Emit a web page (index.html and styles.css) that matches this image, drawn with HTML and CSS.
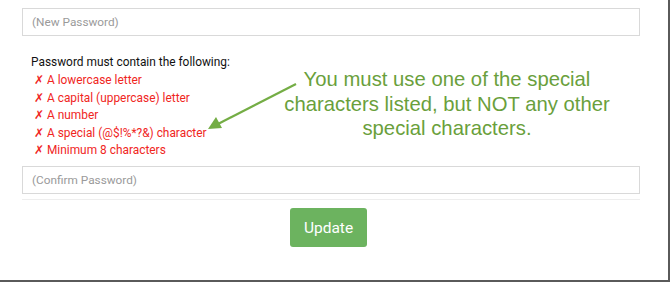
FILE: index.html
```html
<!DOCTYPE html>
<html lang="en">
<head>
  <meta charset="UTF-8" />
  <title>Change Password</title>
  <link rel="stylesheet" href="styles.css">
</head>
<body>
  <div class="frame">
    <form class="pw-form">
      <input class="pw-input" type="password" placeholder="(New Password)" />

      <!-- Password rules -->
      <div class="rules">
        <div class="rules-title">Password must contain the following:</div>
        <ul class="rules-list">
          <li>✗ A lowercase letter</li>
          <li>✗ A capital (uppercase) letter</li>
          <li>✗ A number</li>
          <li>✗ A special (@$!%*?&amp;) character</li>
          <li>✗ Minimum 8 characters</li>
        </ul>
      </div>

      <input class="pw-input" type="password" placeholder="(Confirm Password)" />
      <div class="divider"></div>

      <div class="actions">
        <button type="button" class="update-btn">Update</button>
      </div>
    </form>

    <!-- Annotation callout -->
    <div class="note">You must use one of the special<br>characters listed, but NOT any other<br>special characters.</div>
    <svg class="note-arrow" width="100" height="52" viewBox="0 0 100 52">
      <line x1="92" y1="4" x2="14" y2="44" stroke="#74ad45" stroke-width="2.2" />
      <polygon points="4,49 12,37 18,48" fill="#74ad45" />
    </svg>
  </div>
</body>
</html>
```

FILE: styles.css
```css
body {
  margin: 0;
  background: #fff;
  font-family: Roboto, 'Liberation Sans', sans-serif;
}

.frame {
  position: relative;
  box-sizing: border-box;
  width: 670px;
  height: 282px;
  border-right: 2px solid #5a5a5a;
  border-bottom: 2px solid #5a5a5a;
  padding: 8px 0 0 22px;
}

.pw-form {
  width: 618px;
}

.pw-input {
  display: block;
  box-sizing: border-box;
  width: 100%;
  height: 28px;
  margin: 0;
  padding: 0 9px;
  border: 1px solid #d9d9d9;
  border-radius: 0;
  font-family: Roboto, sans-serif;
  font-size: 11.8px;
  color: #333;
  outline: none;
}

.pw-input::placeholder {
  color: #9a9a9a;
}

/* Rules */
.rules {
  margin: 18px 0 7px 9px;
  font-size: 11.9px;
  line-height: 17.4px;
}

.rules-title {
  color: #111;
}

.rules-list {
  list-style: none;
  margin: 1px 0 0;
  padding: 0 0 0 3px;
  color: #f0261e;
}

.divider {
  height: 1px;
  margin-top: 5px;
  background: #eeeeee;
}

.actions {
  display: flex;
  justify-content: center;
  padding: 8px 5px 0 0;
}

.update-btn {
  width: 77px;
  height: 39px;
  border: none;
  border-radius: 3px;
  background: #6cb35f;
  color: #fff;
  font-family: Roboto, sans-serif;
  font-size: 15.5px;
  cursor: pointer;
}

/* Annotation */
.note {
  position: absolute;
  left: 272px;
  top: 67px;
  width: 350px;
  text-align: center;
  font-family: 'Liberation Sans', Arial, sans-serif;
  font-size: 20.3px;
  line-height: 24.5px;
  color: #6a9f3c;
}

.note-arrow {
  position: absolute;
  left: 204px;
  top: 80px;
}
```
